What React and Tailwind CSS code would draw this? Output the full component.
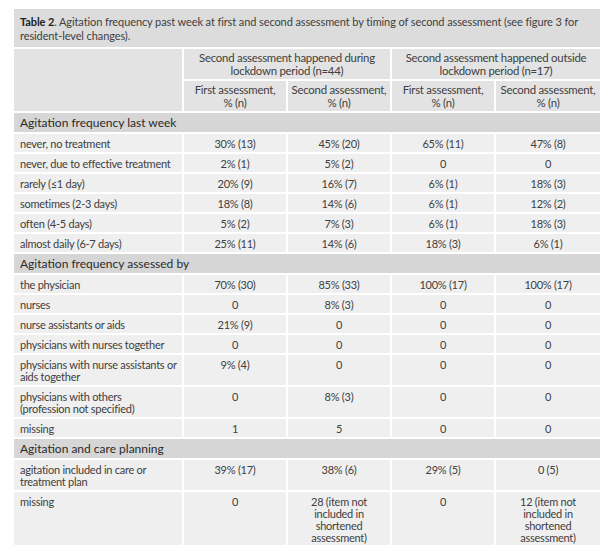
const rows = [
  { section: "Agitation frequency last week" },
  { label: "never, no treatment", v: ["30% (13)", "45% (20)", "65% (11)", "47% (8)"] },
  { label: "never, due to effective treatment", v: ["2% (1)", "5% (2)", "0", "0"] },
  { label: "rarely (≤1 day)", v: ["20% (9)", "16% (7)", "6% (1)", "18% (3)"] },
  { label: "sometimes (2-3 days)", v: ["18% (8)", "14% (6)", "6% (1)", "12% (2)"] },
  { label: "often (4-5 days)", v: ["5% (2)", "7% (3)", "6% (1)", "18% (3)"] },
  { label: "almost daily (6-7 days)", v: ["25% (11)", "14% (6)", "18% (3)", "6% (1)"] },
  { section: "Agitation frequency assessed by" },
  { label: "the physician", v: ["70% (30)", "85% (33)", "100% (17)", "100% (17)"] },
  { label: "nurses", v: ["0", "8% (3)", "0", "0"] },
  { label: "nurse assistants or aids", v: ["21% (9)", "0", "0", "0"] },
  { label: "physicians with nurses together", v: ["0", "0", "0", "0"] },
  { label: "physicians with nurse assistants or\naids together", v: ["9% (4)", "0", "0", "0"], tall: true },
  { label: "physicians with others\n(profession not specified)", v: ["0", "8% (3)", "0", "0"], tall: true },
  { label: "missing", v: ["1", "5", "0", "0"] },
  { section: "Agitation and care planning" },
  { label: "agitation included in care or\ntreatment plan", v: ["39% (17)", "38% (6)", "29% (5)", "0 (5)"], tall: true },
  {
    label: "missing",
    v: ["0", "28 (item not\nincluded in\nshortened\nassessment)", "0", "12 (item not\nincluded in\nshortened\nassessment)"],
    xl: true,
  },
];

export default function App() {
  return (
    <div className="bg-white w-[613px] h-[557px] pt-[9px] pl-[14px]" style={{ fontFamily: 'Lato, "Open Sans", sans-serif' }}>
      <div className="w-[586px] bg-[#efefef] text-[#404040]">
        <div className="bg-[#dcdcdc] h-[40px] px-[6px] pt-[6px] text-[11px] leading-[14px] tracking-[-0.1px] border-b-2 border-white">
          <div className="flex whitespace-nowrap">
            <span className="font-bold text-[#222]">Table 2</span>
            <span>. Agitation frequency past week at first and second assessment by timing of second assessment (see figure 3 for</span>
          </div>
          <div>resident-level changes).</div>
        </div>
        <table className="w-full border-collapse table-fixed text-[11px] leading-[12px] tracking-[-0.25px]">
          <colgroup>
            <col className="w-[169px]" />
            <col className="w-[104px]" />
            <col className="w-[104px]" />
            <col className="w-[104px]" />
            <col className="w-[105px]" />
          </colgroup>
          <thead>
            <tr className="bg-[#e3e3e3] h-[31px] text-[11.4px]">
              <th className="border-2 border-t-0 border-l-0 border-white" rowSpan={2}></th>
              <th colSpan={2} className="border-2 border-t-0 border-white font-normal text-center leading-[13px] whitespace-nowrap">
                Second assessment happened during
                <br />
                lockdown period (n=44)
              </th>
              <th colSpan={2} className="border-2 border-t-0 border-r-0 border-white font-normal text-center leading-[13px] whitespace-nowrap">
                Second assessment happened outside
                <br />
                lockdown period (n=17)
              </th>
            </tr>
            <tr className="bg-[#e3e3e3] h-[32px] text-[11.4px]">
              {["First assessment,", "Second assessment,", "First assessment,", "Second assessment,"].map((h, i) => (
                <th
                  key={i}
                  className={`border-2 border-white font-normal text-center leading-[13px] whitespace-nowrap ${i === 3 ? "border-r-0" : ""}`}
                >
                  {h}
                  <br />% (n)
                </th>
              ))}
            </tr>
          </thead>
          <tbody>
            {rows.map((r, i) =>
              r.section ? (
                <tr key={i} className="bg-[#d6d6d6] h-[21px]">
                  <td colSpan={5} className="px-[6px] text-[12px] tracking-normal text-[#2a2a2a] border-y-2 border-white">
                    {r.section}
                  </td>
                </tr>
              ) : (
                <tr key={i} className={r.xl ? "h-[55px]" : r.tall ? "h-[32px]" : "h-[20px]"}>
                  <td className="px-[6px] align-top pt-[4px] border-2 border-l-0 border-white whitespace-pre">{r.label}</td>
                  {r.v.map((c, j) => (
                    <td
                      key={j}
                      className={`text-center align-top pt-[4px] border-2 border-white whitespace-pre ${j === 3 ? "border-r-0" : ""}`}
                    >
                      {c}
                    </td>
                  ))}
                </tr>
              )
            )}
          </tbody>
        </table>
      </div>
    </div>
  );
}
